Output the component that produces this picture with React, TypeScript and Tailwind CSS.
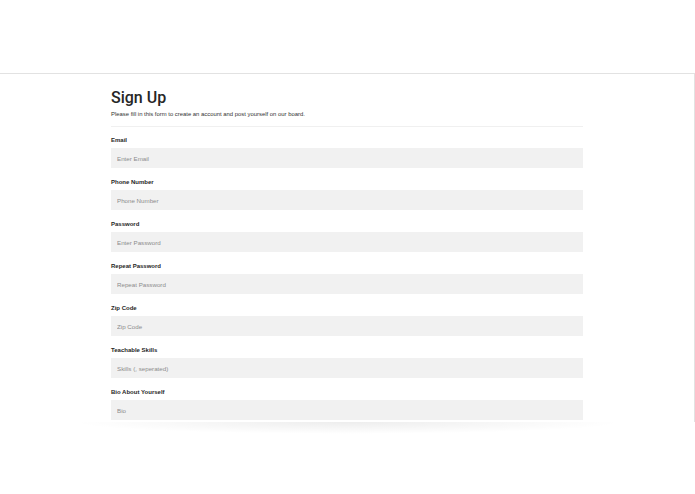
import React from 'react';

const fields = [
  { label: 'Email', placeholder: 'Enter Email' },
  { label: 'Phone Number', placeholder: 'Phone Number' },
  { label: 'Password', placeholder: 'Enter Password' },
  { label: 'Repeat Password', placeholder: 'Repeat Password' },
  { label: 'Zip Code', placeholder: 'Zip Code' },
  { label: 'Teachable Skills', placeholder: 'Skills (, seperated)' },
  { label: 'Bio About Yourself', placeholder: 'Bio' },
];

export default function App() {
  return (
    <div className="w-[695px] h-[494px] bg-white overflow-hidden font-['Liberation_Sans',Arial,sans-serif]">
      <div className="h-[73px]" />

      {/* framed page */}
      <div className="h-[349px] border-t border-r border-[#e2e2e2] overflow-hidden">
        <div className="ml-[111px] w-[472px] pt-[16px]">
          <h1 className="text-[16px] leading-[16px] text-[#262626] font-medium font-['Roboto','Liberation_Sans',sans-serif]">
            Sign Up
          </h1>
          <p className="mt-[4px] text-[5.9px] leading-[8px] text-[#333]">
            Please fill in this form to create an account and post yourself on our board.
          </p>
          <div className="mt-[8px] h-px bg-[#f0f0f0]" />

          <div className="pt-[9px]">
            {fields.map((f) => (
              <div key={f.label} className="mb-[10px]">
                <label className="block text-[6px] leading-[8px] font-bold text-[#262626] mb-[4px]">
                  {f.label}
                </label>
                <input
                  readOnly
                  placeholder={f.placeholder}
                  className="block w-full h-[20px] bg-[#f1f1f1] px-[6px] text-[6.2px] outline-none placeholder:text-[#8c8c8c]"
                />
              </div>
            ))}
          </div>
        </div>
      </div>

      {/* soft shadow under the frame */}
      <div className="mx-[70px] h-[12px] bg-[radial-gradient(ellipse_at_top,rgba(0,0,0,0.07),rgba(0,0,0,0)_70%)]" />
    </div>
  );
}
